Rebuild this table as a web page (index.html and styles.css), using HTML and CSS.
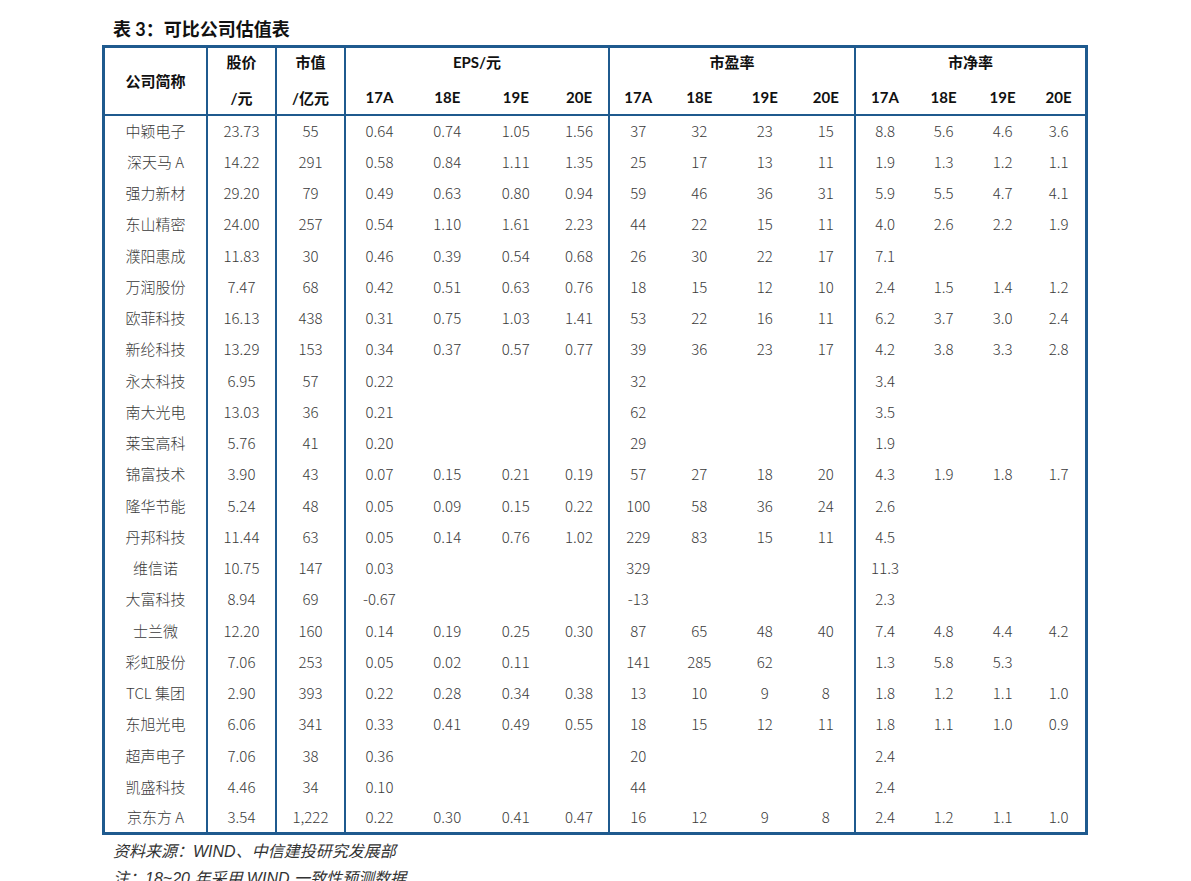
FILE: index.html
```html
<!DOCTYPE html>
<html lang="zh">
<head>
<meta charset="utf-8">
<title>表 3：可比公司估值表</title>
<link rel="stylesheet" href="styles.css">
</head>
<body>
<div class="page">
  <div class="title">表 3：可比公司估值表</div>
  <table class="val">
    <colgroup>
      <col class="c-name"><col class="c-px"><col class="c-px">
      <col class="c-e1"><col class="c-e2"><col class="c-e2"><col class="c-e3">
      <col class="c-p1"><col class="c-p2"><col class="c-p2"><col class="c-p1">
      <col class="c-b"><col class="c-b"><col class="c-b"><col class="c-b4">
    </colgroup>
    <thead>
      <tr class="h1">
        <th rowspan="2" class="g name-h">公司简称</th>
        <th class="g">股价</th>
        <th class="g">市值</th>
        <th colspan="4" class="g">EPS/元</th>
        <th colspan="4" class="g">市盈率</th>
        <th colspan="4">市净率</th>
      </tr>
      <tr class="h2">
        <th class="g">/元</th>
        <th class="g">/亿元</th>
        <th>17A</th><th>18E</th><th>19E</th><th class="g">20E</th>
        <th>17A</th><th>18E</th><th>19E</th><th class="g">20E</th>
        <th>17A</th><th>18E</th><th>19E</th><th>20E</th>
      </tr>
    </thead>
    <tbody>
      <tr><td class="g">中颖电子</td><td class="g">23.73</td><td class="g">55</td><td>0.64</td><td>0.74</td><td>1.05</td><td class="g">1.56</td><td>37</td><td>32</td><td>23</td><td class="g">15</td><td>8.8</td><td>5.6</td><td>4.6</td><td>3.6</td></tr>
      <tr><td class="g">深天马 A</td><td class="g">14.22</td><td class="g">291</td><td>0.58</td><td>0.84</td><td>1.11</td><td class="g">1.35</td><td>25</td><td>17</td><td>13</td><td class="g">11</td><td>1.9</td><td>1.3</td><td>1.2</td><td>1.1</td></tr>
      <tr><td class="g">强力新材</td><td class="g">29.20</td><td class="g">79</td><td>0.49</td><td>0.63</td><td>0.80</td><td class="g">0.94</td><td>59</td><td>46</td><td>36</td><td class="g">31</td><td>5.9</td><td>5.5</td><td>4.7</td><td>4.1</td></tr>
      <tr><td class="g">东山精密</td><td class="g">24.00</td><td class="g">257</td><td>0.54</td><td>1.10</td><td>1.61</td><td class="g">2.23</td><td>44</td><td>22</td><td>15</td><td class="g">11</td><td>4.0</td><td>2.6</td><td>2.2</td><td>1.9</td></tr>
      <tr><td class="g">濮阳惠成</td><td class="g">11.83</td><td class="g">30</td><td>0.46</td><td>0.39</td><td>0.54</td><td class="g">0.68</td><td>26</td><td>30</td><td>22</td><td class="g">17</td><td>7.1</td><td></td><td></td><td></td></tr>
      <tr><td class="g">万润股份</td><td class="g">7.47</td><td class="g">68</td><td>0.42</td><td>0.51</td><td>0.63</td><td class="g">0.76</td><td>18</td><td>15</td><td>12</td><td class="g">10</td><td>2.4</td><td>1.5</td><td>1.4</td><td>1.2</td></tr>
      <tr><td class="g">欧菲科技</td><td class="g">16.13</td><td class="g">438</td><td>0.31</td><td>0.75</td><td>1.03</td><td class="g">1.41</td><td>53</td><td>22</td><td>16</td><td class="g">11</td><td>6.2</td><td>3.7</td><td>3.0</td><td>2.4</td></tr>
      <tr><td class="g">新纶科技</td><td class="g">13.29</td><td class="g">153</td><td>0.34</td><td>0.37</td><td>0.57</td><td class="g">0.77</td><td>39</td><td>36</td><td>23</td><td class="g">17</td><td>4.2</td><td>3.8</td><td>3.3</td><td>2.8</td></tr>
      <tr><td class="g">永太科技</td><td class="g">6.95</td><td class="g">57</td><td>0.22</td><td></td><td></td><td class="g"></td><td>32</td><td></td><td></td><td class="g"></td><td>3.4</td><td></td><td></td><td></td></tr>
      <tr><td class="g">南大光电</td><td class="g">13.03</td><td class="g">36</td><td>0.21</td><td></td><td></td><td class="g"></td><td>62</td><td></td><td></td><td class="g"></td><td>3.5</td><td></td><td></td><td></td></tr>
      <tr><td class="g">莱宝高科</td><td class="g">5.76</td><td class="g">41</td><td>0.20</td><td></td><td></td><td class="g"></td><td>29</td><td></td><td></td><td class="g"></td><td>1.9</td><td></td><td></td><td></td></tr>
      <tr><td class="g">锦富技术</td><td class="g">3.90</td><td class="g">43</td><td>0.07</td><td>0.15</td><td>0.21</td><td class="g">0.19</td><td>57</td><td>27</td><td>18</td><td class="g">20</td><td>4.3</td><td>1.9</td><td>1.8</td><td>1.7</td></tr>
      <tr><td class="g">隆华节能</td><td class="g">5.24</td><td class="g">48</td><td>0.05</td><td>0.09</td><td>0.15</td><td class="g">0.22</td><td>100</td><td>58</td><td>36</td><td class="g">24</td><td>2.6</td><td></td><td></td><td></td></tr>
      <tr><td class="g">丹邦科技</td><td class="g">11.44</td><td class="g">63</td><td>0.05</td><td>0.14</td><td>0.76</td><td class="g">1.02</td><td>229</td><td>83</td><td>15</td><td class="g">11</td><td>4.5</td><td></td><td></td><td></td></tr>
      <tr><td class="g">维信诺</td><td class="g">10.75</td><td class="g">147</td><td>0.03</td><td></td><td></td><td class="g"></td><td>329</td><td></td><td></td><td class="g"></td><td>11.3</td><td></td><td></td><td></td></tr>
      <tr><td class="g">大富科技</td><td class="g">8.94</td><td class="g">69</td><td>-0.67</td><td></td><td></td><td class="g"></td><td>-13</td><td></td><td></td><td class="g"></td><td>2.3</td><td></td><td></td><td></td></tr>
      <tr><td class="g">士兰微</td><td class="g">12.20</td><td class="g">160</td><td>0.14</td><td>0.19</td><td>0.25</td><td class="g">0.30</td><td>87</td><td>65</td><td>48</td><td class="g">40</td><td>7.4</td><td>4.8</td><td>4.4</td><td>4.2</td></tr>
      <tr><td class="g">彩虹股份</td><td class="g">7.06</td><td class="g">253</td><td>0.05</td><td>0.02</td><td>0.11</td><td class="g"></td><td>141</td><td>285</td><td>62</td><td class="g"></td><td>1.3</td><td>5.8</td><td>5.3</td><td></td></tr>
      <tr><td class="g">TCL 集团</td><td class="g">2.90</td><td class="g">393</td><td>0.22</td><td>0.28</td><td>0.34</td><td class="g">0.38</td><td>13</td><td>10</td><td>9</td><td class="g">8</td><td>1.8</td><td>1.2</td><td>1.1</td><td>1.0</td></tr>
      <tr><td class="g">东旭光电</td><td class="g">6.06</td><td class="g">341</td><td>0.33</td><td>0.41</td><td>0.49</td><td class="g">0.55</td><td>18</td><td>15</td><td>12</td><td class="g">11</td><td>1.8</td><td>1.1</td><td>1.0</td><td>0.9</td></tr>
      <tr><td class="g">超声电子</td><td class="g">7.06</td><td class="g">38</td><td>0.36</td><td></td><td></td><td class="g"></td><td>20</td><td></td><td></td><td class="g"></td><td>2.4</td><td></td><td></td><td></td></tr>
      <tr><td class="g">凯盛科技</td><td class="g">4.46</td><td class="g">34</td><td>0.10</td><td></td><td></td><td class="g"></td><td>44</td><td></td><td></td><td class="g"></td><td>2.4</td><td></td><td></td><td></td></tr>
      <tr><td class="g">京东方 A</td><td class="g">3.54</td><td class="g">1,222</td><td>0.22</td><td>0.30</td><td>0.41</td><td class="g">0.47</td><td>16</td><td>12</td><td>9</td><td class="g">8</td><td>2.4</td><td>1.2</td><td>1.1</td><td>1.0</td></tr>
    </tbody>
  </table>
  <p class="note">资料来源：WIND、中信建投研究发展部</p>
  <p class="note">注：18~20 年采用 WIND 一致性预测数据</p>
</div>
</body>
</html>
```

FILE: styles.css
```css
html, body {
  margin: 0;
  padding: 0;
  background: #ffffff;
}

.page {
  padding: 17px 0 0 102px;
  font-family: "Noto Sans CJK SC", "Noto Sans", sans-serif;
  color: #222;
}

.title {
  font-family: "Lato", "Noto Sans CJK SC", sans-serif;
  font-weight: 700;
  font-size: 18px;
  line-height: 25px;
  height: 25px;
  padding-left: 11px;
  margin-bottom: 3px;
  color: #111;
}

.val {
  border-collapse: collapse;
  table-layout: fixed;
  width: 984px;
  border: 3px solid #1f5a8e;
}

.c-name { width: 103.5px; }
.c-px { width: 69px; }
.c-e1 { width: 68px; }
.c-e2 { width: 68.5px; }
.c-e3 { width: 59px; }
.c-p1 { width: 57.5px; }
.c-p2 { width: 65.5px; }
.c-b { width: 59px; }
.c-b4 { width: 54.5px; }

.val thead {
  border-bottom: 2px solid #1f5a8e;
}

.val th {
  font-family: "Lato", "Noto Sans CJK SC", sans-serif;
  font-weight: 700;
  font-size: 15px;
  color: #111;
  text-align: center;
  padding: 0;
}

.h1 { height: 34px; }
.h1 th { padding-bottom: 5px; }
.h1 th.name-h { padding-bottom: 0; }
.h2 { height: 34px; }
.h2 th { border-bottom: 2px solid #1f5a8e; }
.name-h { border-bottom: 2px solid #1f5a8e; }

.val td {
  font-family: "Noto Sans CJK SC", "Noto Sans", sans-serif;
  font-weight: 300;
  font-size: 15px;
  color: #3a3a3a;
  text-align: center;
  padding: 0;
  white-space: nowrap;
}

.val tbody tr { height: 31.26px; }

.val .g { border-right: 2px solid #1f5a8e; }

.note {
  margin: 0;
  padding-left: 11px;
  font-family: "Liberation Sans", "Noto Sans CJK SC", sans-serif;
  font-style: italic;
  font-size: 16px;
  line-height: 27px;
  color: #333;
}

.note:first-of-type { margin-top: 3px; }
```
